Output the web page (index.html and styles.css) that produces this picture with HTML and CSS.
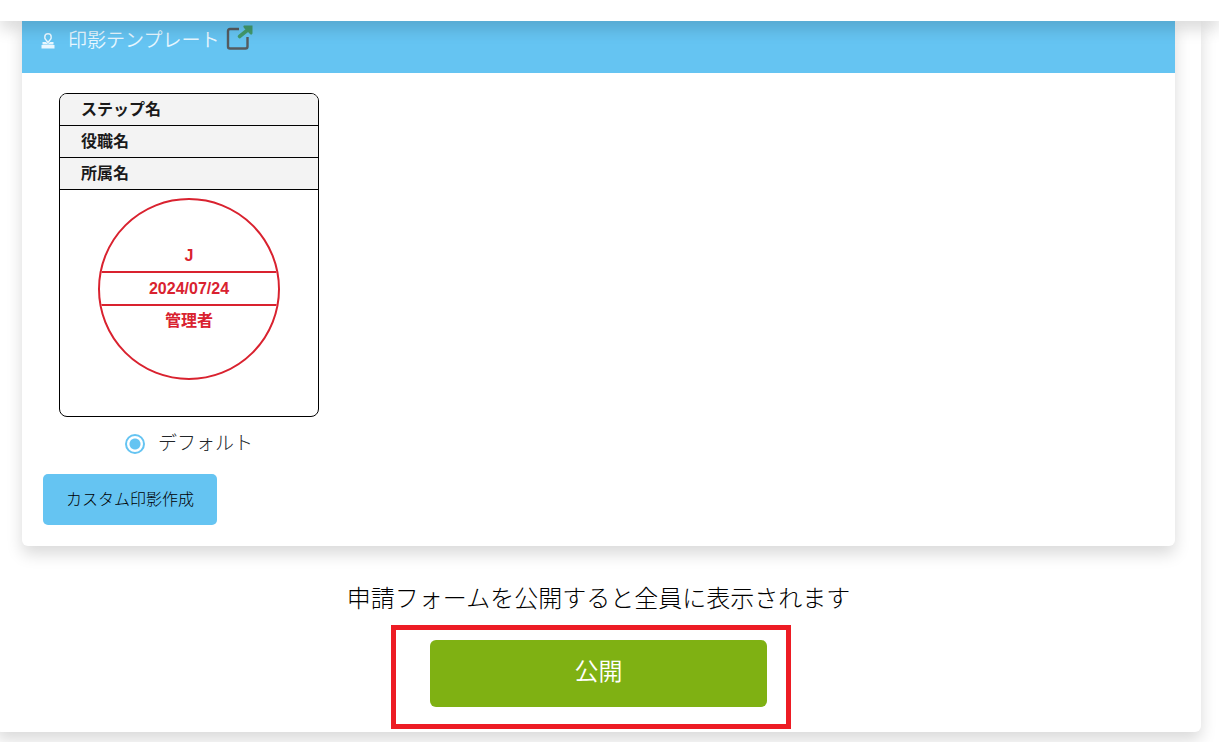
FILE: index.html
```html
<!DOCTYPE html>
<html lang="ja">
<head>
<meta charset="utf-8">
<meta name="viewport" content="width=device-width, initial-scale=1">
<title>印影テンプレート</title>
<link rel="stylesheet" href="styles.css">
</head>
<body>
<header class="topbar"></header>
<main class="panel">
  <section class="card">
    <h2 class="card-header">
      <svg class="stamp-icon" viewBox="0 0 14 16" aria-hidden="true">
        <path d="M7 9.500L4.600 6.400Q3.600 5.200 3.800 4A3.200 3.200 0 0 1 10.200 4Q10.400 5.200 9.400 6.400z" fill="none" stroke="currentColor" stroke-width="1.500"/>
        <path d="M1.500 9H5L7 11L9 9H12.500V11.500H1.500z" fill="currentColor"/>
        <path d="M.5 12H13.500V15.500H.5z" fill="currentColor"/>
      </svg>
      <span>印影テンプレート</span>
      <a class="open-link" href="#" aria-label="新しいタブで開く">
        <svg class="open-icon" viewBox="0 0 28 26" aria-hidden="true">
          <path d="M14 4H5Q3 4 3 6V21.500Q3 23.500 5 23.500H20.500Q22.500 23.500 22.500 21.500V12" fill="none" stroke="#555c60" stroke-width="2.400"/>
          <path d="M14.500 11.500L22 5.500" fill="none" stroke="#429a6c" stroke-width="3.600" stroke-linecap="round"/>
          <path d="M19 .5H27.500V8.500Q26.500 10.500 25 9L19.500 3.500Q17.500 1.500 19 .5z" fill="#429a6c"/>
        </svg>
      </a>
    </h2>
    <div class="card-body">
      <div class="template">
        <div class="stamp-box">
          <div class="stamp-row">ステップ名</div>
          <div class="stamp-row">役職名</div>
          <div class="stamp-row">所属名</div>
          <div class="stamp-area">
            <div class="seal">
              <div class="seal-top">J</div>
              <div class="seal-date">2024/07/24</div>
              <div class="seal-bottom">管理者</div>
            </div>
          </div>
        </div>
        <label class="choice"><input type="radio" name="template" class="radio" checked><span>デフォルト</span></label>
      </div>
      <button type="button" class="custom-button">カスタム印影作成</button>
    </div>
  </section>
  <div class="publish">
    <p class="publish-note">申請フォームを公開すると全員に表示されます</p>
    <div class="publish-action">
      <button type="button" class="publish-button">公開</button>
      <div class="highlight"></div>
    </div>
  </div>
</main>
</body>
</html>
```
FILE: styles.css
```css
* { box-sizing: border-box; }

body {
  margin: 0;
  background: #fff;
  color: #212529;
  font: 300 16px/24px "Liberation Sans", "Noto Sans CJK JP", sans-serif;
  overflow: hidden;
}

button { font: inherit; cursor: pointer; border: 0; }

.topbar {
  position: sticky;
  top: 0;
  z-index: 2;
  height: 21px;
  background: #fff;
  box-shadow: 0 8px 16px rgba(0, 0, 0, .15);
}

.panel {
  margin: 0 18px 24px -4px;
  padding: 0 26px 25px;
  border-radius: 0 0 6px 6px;
  background: #fff;
  box-shadow: 0 8px 16px rgba(0, 0, 0, .15);
}

.card {
  border-radius: 0 0 6px 6px;
  box-shadow: 0 8px 16px rgba(0, 0, 0, .15);
}

.card-header {
  display: flex;
  align-items: center;
  margin: 0;
  padding: 0 19px 12px;
  height: 52px;
  background: #65c4f2;
  color: #e8f7ff;
  font-size: 19px;
  font-weight: 350;
}

.stamp-icon { width: 14px; height: 16px; margin-right: 13px; }
.open-link { display: flex; margin: 0 0 6px 6px; }
.open-icon { width: 28px; height: 26px; }

.card-body { padding: 20px 21px 21px; }

.template { width: 260px; margin-left: 16px; }

.stamp-box {
  border: 1px solid #000;
  border-radius: 8px;
  overflow: hidden;
  font-weight: 700;
  color: #1a1a1a;
}

.stamp-row {
  padding: 4px 21px 3px;
  border-bottom: 1px solid #000;
  background: #f3f3f3;
  line-height: 24px;
}

.stamp-area {
  display: flex;
  justify-content: center;
  padding: 8px 0 36px;
}

.seal {
  display: grid;
  grid-template-rows: 71px 35px 1fr;
  width: 182px;
  height: 182px;
  border: 2px solid #d9222f;
  border-radius: 50%;
  overflow: hidden;
  color: #d9222f;
  text-align: center;
}

.seal-top { align-self: end; padding-bottom: 3px; }
.seal-date {
  border: solid #d9222f;
  border-width: 2px 0;
  line-height: 31px;
}
.seal-bottom { padding-top: 3px; }

.choice {
  display: flex;
  align-items: center;
  justify-content: center;
  gap: 13px;
  margin-top: 15px;
  font-size: 19px;
}

.radio {
  appearance: none;
  width: 20px;
  height: 20px;
  margin: 0;
  border: 2px solid #65c4f2;
  border-radius: 50%;
  background: radial-gradient(circle, #65c4f2 5px, #fff 6px);
}

.custom-button {
  display: block;
  margin-top: 18px;
  padding: 14px 23px 13px;
  border-radius: 5px;
  background: #65c4f2;
  color: #000;
}

.publish {
  display: flex;
  flex-direction: column;
  align-items: center;
  padding-top: 35px;
}

.publish-note {
  margin: 0 0 23px;
  color: #000;
  font-size: 24px;
  line-height: 36px;
}

.publish-action { position: relative; width: 337px; max-width: 100%; }

.publish-button {
  display: block;
  width: 100%;
  padding: 14px 16px 17px;
  border-radius: 6px;
  background: #7fb113;
  color: #fff;
  font-size: 24px;
  font-weight: 350;
  line-height: 36px;
}

.highlight {
  position: absolute;
  inset: -15px -24px -22px -39px;
  border: 5px solid #ed1c24;
  pointer-events: none;
}
```
